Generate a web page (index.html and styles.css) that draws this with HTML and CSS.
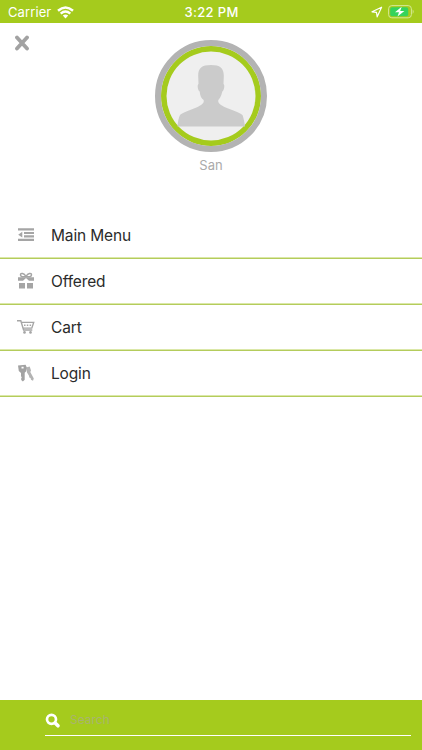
FILE: index.html
```html
<!DOCTYPE html>
<html lang="en">
<head>
<meta charset="utf-8">
<meta name="viewport" content="width=device-width, initial-scale=1">
<title>Menu</title>
<link rel="stylesheet" href="styles.css">
</head>
<body>
<header class="status">
  <div class="status-left">
    <span class="carrier">Carrier</span>
    <svg class="wifi" width="17" height="13" viewBox="0 0 17 13" fill="none" stroke="#fff" stroke-width="2.5"><path d="M1 4.7Q8.5-1.7 16 4.7M3.7 7.6Q8.5 3.5 13.3 7.6"/><path d="M5.8 9.6Q8.5 7.5 11.2 9.6L8.5 12.4Z" fill="#fff" stroke="none"/></svg>
  </div>
  <span class="time">3:22 PM</span>
  <div class="status-right">
    <svg width="12" height="12" viewBox="0 0 12 12" fill="none" stroke="#fff" stroke-width="1.2" stroke-linejoin="round"><path d="M10.6 1.2L1 5.8L5.5 6.4L6.2 10.8Z"/></svg>
    <svg width="27" height="14" viewBox="0 0 27 14"><rect x=".6" y=".6" width="22.8" height="12.2" rx="3.2" fill="none" stroke="#d6e995"/><rect x="2.2" y="2.2" width="18" height="9" rx="1.8" fill="#35d35b"/><path d="M24.7 4.5Q26.6 6.7 24.7 8.9Z" fill="#d6e995"/><path d="M13.7 1.8L7 7.3H11L9.5 11.6L16.4 6H12.2Z" fill="#fff"/></svg>
  </div>
</header>
<section class="profile">
  <svg class="close" width="16" height="16" viewBox="0 0 16 16" stroke="#a2a2a2" stroke-width="3.800" stroke-linecap="round"><path d="M3 2.500L13 13.500M13 2.500L3 13.500"/></svg>
  <div class="avatar">
    <svg width="100" height="100" viewBox="0 0 100 100"><path fill="#cbcbcb" d="M50 19C59 19 62.800 22 62.800 30L62.500 38C64 38.500 63.300 44.500 61.300 45.500C60.500 50 58.500 52.500 57.300 54V56C59.500 61.500 77 65 81.500 69Q83 73 84 80.500H16.500Q17 73 19 69C23.500 65 40.500 61.500 42.700 56V54C40.500 52.500 39 50 38.700 45.500C36.700 44.500 36 38.500 37.500 38L37.200 30C37 22 41 19 50 19Z"/></svg>
  </div>
  <div class="name">San</div>
</section>
<nav class="menu">
  <a class="item"><svg class="icon" width="18" height="18" viewBox="0 0 18 18" fill="#a5a5a5"><path d="M1 2.200H17V4.400H1ZM7 5.900H17V8H7ZM7 9.300H17V11.400H7ZM1 12.800H17V15H1ZM5.300 5.800V11.600L1.200 8.700Z"/></svg><span>Main Menu</span></a>
  <a class="item"><svg class="icon" width="18" height="18" viewBox="0 0 18 18" fill="#a5a5a5"><path d="M2 11H8V16.500H2ZM10 11H16V16.500H10ZM1 5.300H17V8.800H12L9.200 6.300H8.800L6 8.800H1Z"/><path fill="none" stroke="#a5a5a5" stroke-width="1.500" d="M9 4.500C7 1 3.500 .5 3.500 3C3.500 5 6 5 9 4.500C12 5 14.500 5 14.500 3C14.500 .5 11 1 9 4.500Z"/></svg><span>Offered</span></a>
  <a class="item"><svg class="icon" width="18" height="18" viewBox="0 0 18 18" fill="none" stroke="#a5a5a5" stroke-width="1.400"><path d="M0 2.800H3.800L6.600 12H15.300M4.500 4.400H16.700L14.800 10.100H6"/><path stroke-dasharray="1.500 1.300" d="M7 7.200H15"/><g fill="#a5a5a5" stroke="none"><circle cx="7.500" cy="14.400" r="1.300"/><circle cx="13.500" cy="14.400" r="1.300"/></g></svg><span>Cart</span></a>
  <a class="item"><svg class="icon" width="18" height="18" viewBox="0 0 18 18"><path fill="#b3b3b3" d="M9 3.500L12.700 2.600L14 6.600L13.300 8L16.800 14.500L16 16.700L14 15.800L13.600 14L12.300 13.600L12 11.800L10 8.500Z"/><path fill="#a2a2a2" fill-rule="evenodd" d="M1 1.400L8.600.8L9.800 3.600L9 7.600L7.700 8.800V15.700L5.900 17.500L4.200 16V14.300L4.800 13.300L4 12.300V9L1.800 7ZM4.500 2.700V4.600H6.600V2.700Z"/></svg><span>Login</span></a>
</nav>
<footer class="footer">
  <label class="search">
    <svg width="16" height="16" viewBox="0 0 16 16" fill="none" stroke="#fff"><circle cx="6.500" cy="6.300" r="4.500" stroke-width="2.700"/><path d="M10.400 10.200L13 12.800" stroke-width="3.600" stroke-linecap="round"/></svg>
    <span>Search</span>
  </label>
</footer>
</body>
</html>
```
FILE: styles.css
```css
* { box-sizing: border-box; }

body {
  margin: 0;
  height: 750px;
  display: flex;
  flex-direction: column;
  overflow: hidden;
  background: #fff;
  font-family: Inter, "Liberation Sans", sans-serif;
}

svg { display: block; flex: none; }

.status {
  height: 23px;
  flex: none;
  display: grid;
  grid-template-columns: 1fr auto 1fr;
  align-items: center;
  padding: 1px 7px 0 8px;
  background: #a5cb1d;
  color: #fff;
  font-size: 13px;
  line-height: 20px;
}

.status-left, .status-right { display: flex; align-items: center; }
.status-left { gap: 6px; }
.carrier { letter-spacing: .1px; }
.status-right { justify-content: flex-end; gap: 5px; }
.time { font-weight: 500; letter-spacing: .35px; }

.profile {
  height: 189px;
  flex: none;
  display: grid;
  grid-template-columns: 1fr 112px 1fr;
  grid-template-rows: 112px auto;
  align-content: start;
  padding-top: 17px;
}

.close { margin: -5px 0 0 14px; }

.avatar {
  width: 112px;
  height: 112px;
  border: 6px solid #b3b3b3;
  border-radius: 50%;
  background: #efefef;
  box-shadow: inset 0 0 0 5.500px #a5cb1d;
}

.name {
  grid-column: 2;
  padding-top: 4px;
  text-align: center;
  color: #aaa;
  font-size: 13px;
  line-height: 18px;
}

.menu { flex: 1; }

.item {
  height: 46px;
  display: flex;
  align-items: center;
  gap: 16px;
  padding-left: 17px;
  border-bottom: 1px solid #dbe8a8;
  box-shadow: 0 1px #b4cc5c;
  color: #2b2b2b;
  font-size: 15.500px;
  line-height: 20px;
  letter-spacing: -.15px;
}

.item span { padding-top: 2px; }

.footer {
  height: 50px;
  flex: none;
  padding: 6px 11px 0 45px;
  background: #a5cb1d;
}

.search {
  height: 30px;
  display: flex;
  align-items: center;
  gap: 9px;
  border-bottom: 1px solid #fff;
  color: #a8b36f;
  font-size: 12px;
}

.search span { padding-bottom: 2px; }
```
